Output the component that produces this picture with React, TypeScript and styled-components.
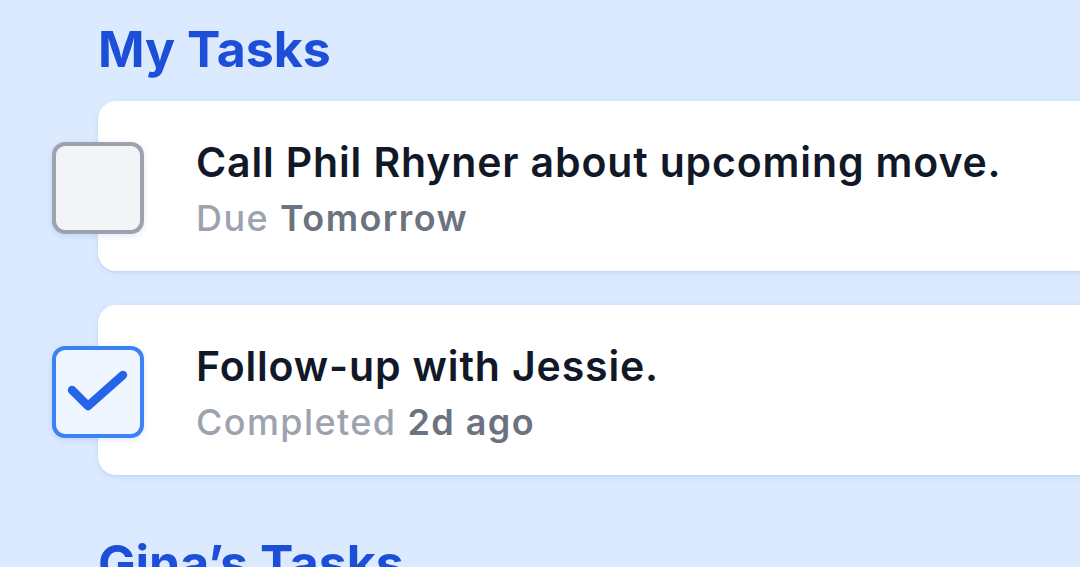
import React from "react";
import styled, { createGlobalStyle } from "styled-components";

const Global = createGlobalStyle`
  html, body { margin: 0; padding: 0; }
  body {
    background: #dbeafe;
    font-family: Inter, "Noto Sans", sans-serif;
    overflow: hidden;
    width: 1080px;
    height: 567px;
  }
`;

const Page = styled.div`
  padding: 24px 0 0 98px;
`;

const Section = styled.section`
  display: flex;
  flex-direction: column;
  margin-bottom: 63px;
`;

const Heading = styled.h2`
  margin: 0 0 27px;
  font-size: 50px;
  line-height: 1;
  font-weight: 700;
  color: #1d4ed8;
  letter-spacing: 0;
`;

const List = styled.ul`
  list-style: none;
  margin: 0;
  padding: 0;
  display: flex;
  flex-direction: column;
  gap: 34px;
  width: 1040px;
`;

const Card = styled.li`
  display: flex;
  align-items: center;
  height: 170px;
  box-sizing: border-box;
  background: #ffffff;
  border-radius: 18px;
  box-shadow: 0 2px 6px rgba(59, 130, 246, 0.12), 0 1px 2px rgba(30, 64, 175, 0.08);
`;

const Box = styled.span<{ $checked?: boolean }>`
  flex: none;
  width: 92px;
  height: 92px;
  box-sizing: border-box;
  margin-left: -46px;
  margin-top: 4px;
  border-radius: 13px;
  border: 4px solid ${(p) => (p.$checked ? "#3b82f6" : "#9ca3af")};
  background: ${(p) => (p.$checked ? "#eff6ff" : "#f3f4f6")};
  box-shadow: 0 2px 6px rgba(30, 64, 175, 0.12);
  display: flex;
  align-items: center;
  justify-content: center;
`;

const Body = styled.div`
  display: flex;
  flex-direction: column;
  margin-left: 52px;
  margin-top: 6px;
`;

const Title = styled.div`
  font-size: 41px;
  line-height: 52px;
  font-weight: 600;
  color: #111827;
  letter-spacing: 0.85px;
`;

const Meta = styled.div`
  margin-top: 6px;
  font-size: 36px;
  line-height: 48px;
  font-weight: 500;
  color: #9ca3af;
  letter-spacing: 1.4px;
`;

const Strong = styled.span`
  font-weight: 600;
  color: #6b7280;
`;

const Check = () => (
  <svg width="84" height="84" viewBox="0 0 84 84" fill="none">
    <path
      d="M16 40 L32 56 L67 25"
      stroke="#2563eb"
      strokeWidth="8.5"
      strokeLinecap="round"
      strokeLinejoin="round"
    />
  </svg>
);

const tasks = [
  { title: "Call Phil Rhyner about upcoming move.", label: "Due", value: "Tomorrow", done: false },
  { title: "Follow-up with Jessie.", label: "Completed", value: "2d ago", done: true },
];

export default function App() {
  return (
    <>
      <Global />
      <Page>
        <Section>
          <Heading>My Tasks</Heading>
          <List>
            {tasks.map((t) => (
              <Card key={t.title}>
                <Box $checked={t.done}>{t.done && <Check />}</Box>
                <Body>
                  <Title>{t.title}</Title>
                  <Meta>
                    {t.label} <Strong>{t.value}</Strong>
                  </Meta>
                </Body>
              </Card>
            ))}
          </List>
        </Section>
        <Section>
          <Heading>Gina’s Tasks</Heading>
        </Section>
      </Page>
    </>
  );
}
